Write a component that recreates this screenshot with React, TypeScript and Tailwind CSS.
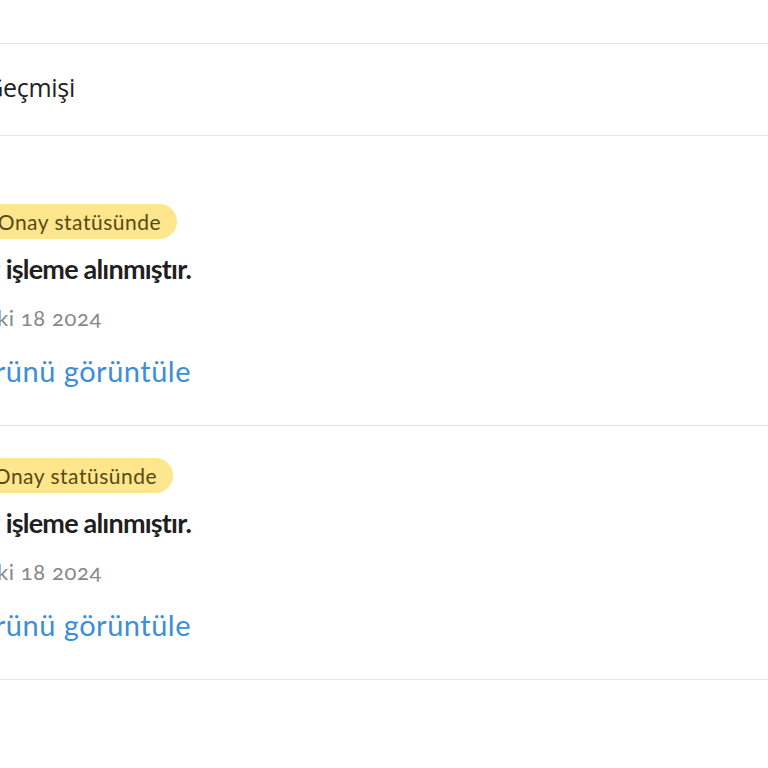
const sans = { fontFamily: "Lato, 'Noto Sans', sans-serif" };

// the screenshot is cropped on the left, so each line is pinned by its right edge
function Edge({ w, children }: { w: string; children: React.ReactNode }) {
  return (
    <div className={`flex justify-end ${w}`}>
      <div className="shrink-0 whitespace-nowrap">{children}</div>
    </div>
  );
}

function OrderCard({ top, badgeW }: { top: string; badgeW: string }) {
  return (
    <div className={`border-b border-[#e4e4e4] pb-[37px] ${top}`} style={sans}>
      <Edge w={badgeW}>
        <span className="flex h-[35px] items-center rounded-full bg-[#fde68b] px-4 text-[21px] tracking-[0.5px] text-[#5a4916]">
          Onay statüsünde
        </span>
      </Edge>
      <div className="mt-[14px]">
        <Edge w="w-[191px]">
          <span className="block text-[27px] font-bold leading-[32px] tracking-[-0.8px] text-[#1f1f1f]">
            Siparişiniz işleme alınmıştır.
          </span>
        </Edge>
      </div>
      <div className="mt-[19px]">
        <Edge w="w-[102px]">
          <span className="block text-[22px] leading-[28px] tracking-[0.6px] text-[#888888] oldstyle-nums">
            Eki 18 2024
          </span>
        </Edge>
      </div>
      <div className="mt-[21px]">
        <Edge w="w-[191px]">
          <a className="block text-[29px] leading-[35px] tracking-[0.5px] text-[#3d8ed8]">
            Ürünü görüntüle
          </a>
        </Edge>
      </div>
    </div>
  );
}

export default function App() {
  return (
    <div className="min-h-screen w-full overflow-hidden bg-white">
      <div className="h-[43px]" />
      <div className="flex h-[93px] items-center border-y border-[#e4e4e4]">
        <Edge w="w-[75px]">
          <h1
            className="mb-[4px] text-[25px] leading-none tracking-[-0.3px] text-[#222222]"
            style={{ fontFamily: "'Open Sans', 'Noto Sans', sans-serif" }}
          >
            Sipariş Geçmişi
          </h1>
        </Edge>
      </div>
      <OrderCard top="pt-[68px]" badgeW="w-[177px]" />
      <OrderCard top="pt-[32px]" badgeW="w-[173px]" />
    </div>
  );
}
